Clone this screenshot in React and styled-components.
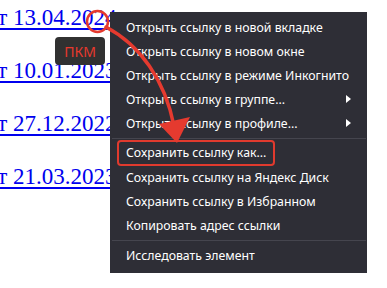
import React from "react";
import styled, { createGlobalStyle } from "styled-components";

const Global = createGlobalStyle`
  html, body { margin: 0; padding: 0; background: #fff; }
  body { width: 387px; height: 288px; overflow: hidden; }
`;

const Page = styled.div`
  position: relative;
  width: 387px;
  height: 288px;
  overflow: hidden;
  background: #fff;
`;

const LinkList = styled.div`
  display: flex;
  flex-direction: column;
  gap: 23px;
  padding-top: 3px;
  margin-left: -14px;
`;

const DateLink = styled.a`
  display: block;
  font-family: "Liberation Serif", "Times New Roman", serif;
  font-size: 23px;
  line-height: 30px;
  color: #0000ee;
  text-decoration: underline;
  text-decoration-thickness: 2px;
  text-underline-offset: 3px;
  white-space: nowrap;
`;

const Badge = styled.div`
  position: absolute;
  left: 55px;
  top: 37px;
  width: 50px;
  height: 28px;
  border-radius: 4px;
  background: #313131;
  color: #e8392d;
  font-family: "Noto Sans", sans-serif;
  font-size: 14px;
  display: flex;
  align-items: center;
  justify-content: center;
`;

const Menu = styled.ul`
  position: absolute;
  left: 110px;
  top: 12px;
  width: 257px;
  margin: 0;
  padding: 3px 0 6px;
  list-style: none;
  background: #2e2e36;
  font-family: "Noto Sans", sans-serif;
  font-size: 12.3px;
  color: #ffffff;
`;

const Item = styled.li`
  height: 24px;
  display: flex;
  align-items: center;
  justify-content: space-between;
  padding: 0 16px 0 16px;
  white-space: nowrap;
`;

const Separator = styled.li`
  height: 1px;
  margin: 3px 1px 2px 2px;
  background: #45454e;
`;

const SubArrow = styled.span`
  width: 0;
  height: 0;
  border-left: 5px solid #fff;
  border-top: 4px solid transparent;
  border-bottom: 4px solid transparent;
`;

const Marked = styled.span`
  display: inline-block;
  margin-left: -9px;
  padding: 0 7px;
  height: 22px;
  line-height: 22px;
  border: 2px solid #e03a2e;
  border-radius: 4px;
`;

const Annotation = styled.svg`
  position: absolute;
  left: 0;
  top: 0;
  pointer-events: none;
`;

const links = ["от 13.04.2024", "от 10.01.2023", "от 27.12.2022", "от 21.03.2023"];

export default function App() {
  return (
    <Page>
      <Global />
      <LinkList>
        {links.map((t) => (
          <DateLink key={t} href="#">{t}</DateLink>
        ))}
      </LinkList>
      <Badge>ПКМ</Badge>
      <Menu>
        <Item>Открыть ссылку в новой вкладке</Item>
        <Item>Открыть ссылку в новом окне</Item>
        <Item>Открыть ссылку в режиме Инкогнито</Item>
        <Item>Открыть ссылку в группе...<SubArrow /></Item>
        <Item>Открыть ссылку в профиле...<SubArrow /></Item>
        <Separator />
        <Item><Marked>Сохранить ссылку как...</Marked></Item>
        <Item>Сохранить ссылку на Яндекс Диск</Item>
        <Item>Сохранить ссылку в Избранном</Item>
        <Item>Копировать адрес ссылки</Item>
        <Separator />
        <Item>Исследовать элемент</Item>
      </Menu>
      <Annotation width="387" height="288" viewBox="0 0 387 288">
        <circle cx="97.5" cy="21.5" r="10.5" fill="none" stroke="#e53a2f" strokeWidth="2.5" />
        <path d="M106 27 C 140 45, 165 80, 174 126" fill="none" stroke="#e53a2f" strokeWidth="3.5" strokeLinecap="round" />
        <polygon points="159,124 190,117 177,143" fill="#e53a2f" />
      </Annotation>
    </Page>
  );
}
